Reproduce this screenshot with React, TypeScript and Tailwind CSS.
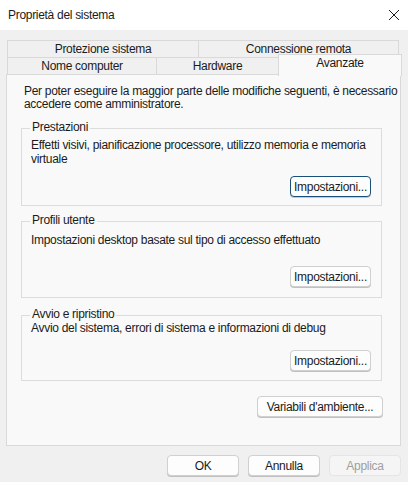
import React from "react";

const font = { fontFamily: '"Segoe UI", "Liberation Sans", Arial, sans-serif', letterSpacing: "-0.3px" };

function Btn({ children, w, disabled, focused }: { children: React.ReactNode; w: string; disabled?: boolean; focused?: boolean }) {
  return (
    <div
      className={`${w} h-[21px] rounded-[4px] border flex items-center justify-center text-[12px] leading-none whitespace-nowrap ${
        disabled
          ? "border-[#e5e5e5] bg-[#f5f5f5] text-[#a0a0a0]"
          : focused
          ? "border-[#1a4f7a] bg-[#fdfdfd] text-[#1b1b1b] shadow-[0_1px_0_#c8c8c8]"
          : "border-[#d0d0d0] bg-[#fdfdfd] text-[#1b1b1b] shadow-[0_1px_0_#c0c0c0]"
      }`}
    >
      {children}
    </div>
  );
}

function Group({ title, children, h }: { title: string; children: React.ReactNode; h: string }) {
  return (
    <div className={`relative ml-[14px] mr-[18px] border border-[#dcdcdc] ${h}`}>
      <div className="absolute left-[8px] top-[-8px] bg-[#f9f9f9] px-[2px] text-[12px] leading-[13px] text-[#1b1b1b] whitespace-nowrap">{title}</div>
      {children}
    </div>
  );
}

export default function App() {
  return (
    <div className="w-[408px] h-[482px] bg-[#f0f0f0] flex flex-col overflow-hidden" style={font}>
      <div className="h-[30px] bg-white flex items-center justify-between pl-[8px] pr-[6px] shrink-0">
        <span className="text-[12px] text-[#1b1b1b]">Proprietà del sistema</span>
        <svg width="14" height="14" viewBox="0 0 14 14" className="mr-[1px]">
          <path d="M2 2 L12 12 M12 2 L2 12" stroke="#1b1b1b" strokeWidth="1" />
        </svg>
      </div>
      <div className="pl-[6px] pr-[7px] pt-[10px] flex flex-col">
        <div className="relative h-[34px]">
          <div className="flex h-[17px] ml-[1px] mr-[2px]">
            <div className="w-[192px] border border-b-0 border-[#d9d9d9] bg-[#f0f0f0] text-[12px] text-[#1b1b1b] flex items-center justify-center leading-none">Protezione sistema</div>
            <div className="flex-1 border border-b-0 border-l-0 border-[#d9d9d9] bg-[#f0f0f0] text-[12px] text-[#1b1b1b] flex items-center justify-center leading-none">Connessione remota</div>
          </div>
          <div className="flex h-[17px] ml-[1px]">
            <div className="w-[150px] border border-b-0 border-[#d9d9d9] bg-[#f0f0f0] text-[12px] text-[#1b1b1b] flex items-center justify-center leading-none">Nome computer</div>
            <div className="w-[122px] border border-b-0 border-l-0 border-[#d9d9d9] bg-[#f0f0f0] text-[12px] text-[#1b1b1b] flex items-center justify-center leading-none">Hardware</div>
          </div>
          <div className="absolute left-[272px] right-[-1px] top-[14px] h-[22px] border border-b-0 border-[#d9d9d9] bg-[#f9f9f9] z-10 flex items-start justify-center text-[12px] leading-[16px] text-[#1b1b1b]">Avanzate</div>
        </div>
        <div className="h-[372px] border border-[#d9d9d9] bg-[#f9f9f9] flex flex-col text-[12px] text-[#1b1b1b] leading-[14px] whitespace-nowrap">
          <div className="px-[17px] pt-[10px] leading-[13px]">
            Per poter eseguire la maggior parte delle modifiche seguenti, è necessario
            <br />
            accedere come amministratore.
          </div>
          <div className="mt-[17px]">
            <Group title="Prestazioni" h="h-[78px]">
              <div className="pl-[9px] pt-[9px] leading-[14px]">
                Effetti visivi, pianificazione processore, utilizzo memoria e memoria
                <br />
                virtuale
              </div>
              <div className="flex justify-end pr-[10px] mt-[10px]">
                <Btn w="w-[81px]" focused>Impostazioni...</Btn>
              </div>
            </Group>
          </div>
          <div className="mt-[15px]">
            <Group title="Profili utente" h="h-[77px]">
              <div className="pl-[9px] pt-[11px]">Impostazioni desktop basate sul tipo di accesso effettuato</div>
              <div className="flex justify-end pr-[10px] mt-[19px]">
                <Btn w="w-[81px]">Impostazioni...</Btn>
              </div>
            </Group>
          </div>
          <div className="mt-[17px]">
            <Group title="Avvio e ripristino" h="h-[66px]">
              <div className="pl-[9px] pt-[5px]">Avvio del sistema, errori di sistema e informazioni di debug</div>
              <div className="flex justify-end pr-[10px] mt-[15px]">
                <Btn w="w-[81px]">Impostazioni...</Btn>
              </div>
            </Group>
          </div>
          <div className="flex justify-end pr-[17px] mt-[15px]">
            <Btn w="w-[126px]">Variabili d'ambiente...</Btn>
          </div>
        </div>
        <div className="flex justify-end gap-[9px] mt-[9px]">
          <Btn w="w-[72px]">OK</Btn>
          <Btn w="w-[72px]">Annulla</Btn>
          <Btn w="w-[72px]" disabled>Applica</Btn>
        </div>
      </div>
    </div>
  );
}
